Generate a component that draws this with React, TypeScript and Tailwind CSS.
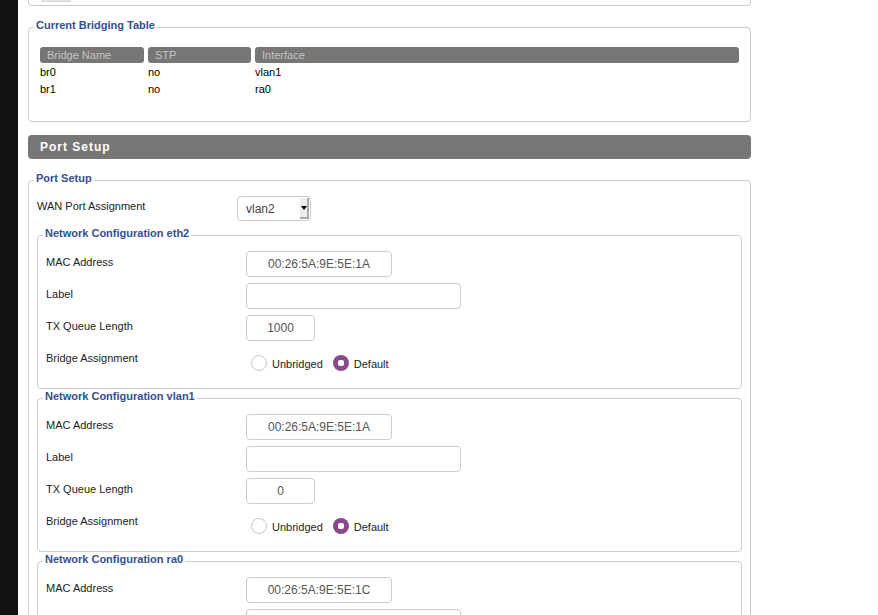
import type { ReactNode } from "react";

const font = "font-['Liberation_Sans',Arial,Helvetica,sans-serif]";

function Legend({ children }: { children: ReactNode }) {
  return (
    <legend className="ml-[2px] px-[2px] pb-[3px] text-[11px] leading-[13px] font-bold text-[#33508f]">
      {children}
    </legend>
  );
}

function Field({ label, children }: { label: string; children: ReactNode }) {
  return (
    <div className="flex items-start h-[26px]">
      <div className="w-[200px] shrink-0 pt-[5px] leading-[13px]">{label}</div>
      {children}
    </div>
  );
}

function TextBox({ value, width }: { value: string; width: string }) {
  return (
    <input
      readOnly
      value={value}
      className={`${width} h-[26px] border border-[#ccc] rounded-[4px] bg-white text-center text-[12px] text-[#555] outline-none`}
    />
  );
}

function Radio({ checked, label }: { checked?: boolean; label: string }) {
  return (
    <div className="flex items-center gap-[5px]">
      {checked ? (
        <span className="w-[16px] h-[16px] rounded-full bg-[#874b89] flex items-center justify-center">
          <span className="w-[6px] h-[6px] rounded-[2px] bg-white" />
        </span>
      ) : (
        <span className="w-[16px] h-[16px] rounded-full border border-[#c8c8c8] bg-white" />
      )}
      <span className="pt-[3px] text-[11px]">{label}</span>
    </div>
  );
}

function NetConfig({ name, mac, txq }: { name: string; mac: string; txq: string }) {
  return (
    <fieldset className="border border-[#ccc] rounded-[4px] px-[3px] mt-[1px] first:mt-0">
      <Legend>Network Configuration {name}</Legend>
      <div className="px-[5px] pt-[8px] pb-[15px] flex flex-col gap-[6px]">
        <Field label="MAC Address">
          <TextBox value={mac} width="w-[146px]" />
        </Field>
        <Field label="Label">
          <TextBox value="" width="w-[215px]" />
        </Field>
        <Field label="TX Queue Length">
          <TextBox value={txq} width="w-[69px]" />
        </Field>
        <Field label="Bridge Assignment">
          <div className="flex items-center gap-[10px] pl-[5px] pt-[6px]">
            <Radio label="Unbridged" />
            <Radio checked label="Default" />
          </div>
        </Field>
      </div>
    </fieldset>
  );
}

const bridges = [
  { name: "br0", stp: "no", iface: "vlan1" },
  { name: "br1", stp: "no", iface: "ra0" },
];

export default function App() {
  return (
    <div className={`flex h-screen overflow-hidden bg-white text-[11px] text-[#222] ${font}`}>
      <div className="w-[18px] shrink-0 bg-[#111]" />
      <main className="pl-[10px] w-[733px] shrink-0">
        {/* tail of previous section */}
        <div className="h-[6px] border-x border-b border-[#ccc] rounded-b-[4px]">
          <div className="ml-[12px] w-[30px] h-[2px] bg-[#e6e6e6] border-x border-b border-[#d4d4d4] rounded-b-[3px]" />
        </div>

        <fieldset className="mt-[13px] border border-[#ccc] rounded-[4px] px-[3px]">
          <Legend>Current Bridging Table</Legend>
          <div className="px-[8px] pt-[12px] pb-[24px]">
            <div className="grid grid-cols-[104px_103px_1fr] gap-x-[4px]">
              {["Bridge Name", "STP", "Interface"].map((h) => (
                <div key={h} className="h-[16px] leading-[16px] bg-[#777674] rounded-[3px] px-[7px] text-[#c4c4c4]">
                  {h}
                </div>
              ))}
              {bridges.map((b) => (
                <div key={b.name} className="contents">
                  <div className="h-[17px] leading-[18px] text-black">{b.name}</div>
                  <div className="h-[17px] leading-[18px] text-black">{b.stp}</div>
                  <div className="h-[17px] leading-[18px] text-black">{b.iface}</div>
                </div>
              ))}
            </div>
          </div>
        </fieldset>

        <div className="mt-[13px] h-[24px] rounded-[4px] bg-[#777674] pl-[12px] flex items-center text-[12px] font-bold tracking-[1px] text-white">
          Port Setup
        </div>

        <fieldset className="mt-[13px] border border-[#ccc] rounded-[4px] px-[3px]">
          <Legend>Port Setup</Legend>
          <div className="px-[5px] pt-[8px] pb-[10px]">
            <div className="flex items-start">
              <div className="w-[200px] shrink-0 pt-[4px] leading-[13px]">WAN Port Assignment</div>
              <div className="w-[74px] h-[25px] border border-[#ccc] rounded-[4px] bg-white flex items-stretch overflow-hidden">
                <span className="flex-1 pl-[8px] flex items-center text-[12px] text-[#444]">vlan2</span>
                <span className="w-[9px] my-[1px] mr-[1px] bg-[#ececec] border-r-2 border-b-2 border-[#a9a9a9] flex items-center justify-center">
                  <span className="w-0 h-0 border-x-[3px] border-x-transparent border-t-[4px] border-t-black" />
                </span>
              </div>
            </div>
            <div className="mt-[6px] flex flex-col">
              <NetConfig name="eth2" mac="00:26:5A:9E:5E:1A" txq="1000" />
              <NetConfig name="vlan1" mac="00:26:5A:9E:5E:1A" txq="0" />
              <NetConfig name="ra0" mac="00:26:5A:9E:5E:1C" txq="0" />
            </div>
          </div>
        </fieldset>
      </main>
      <div className="flex-1" />
    </div>
  );
}
